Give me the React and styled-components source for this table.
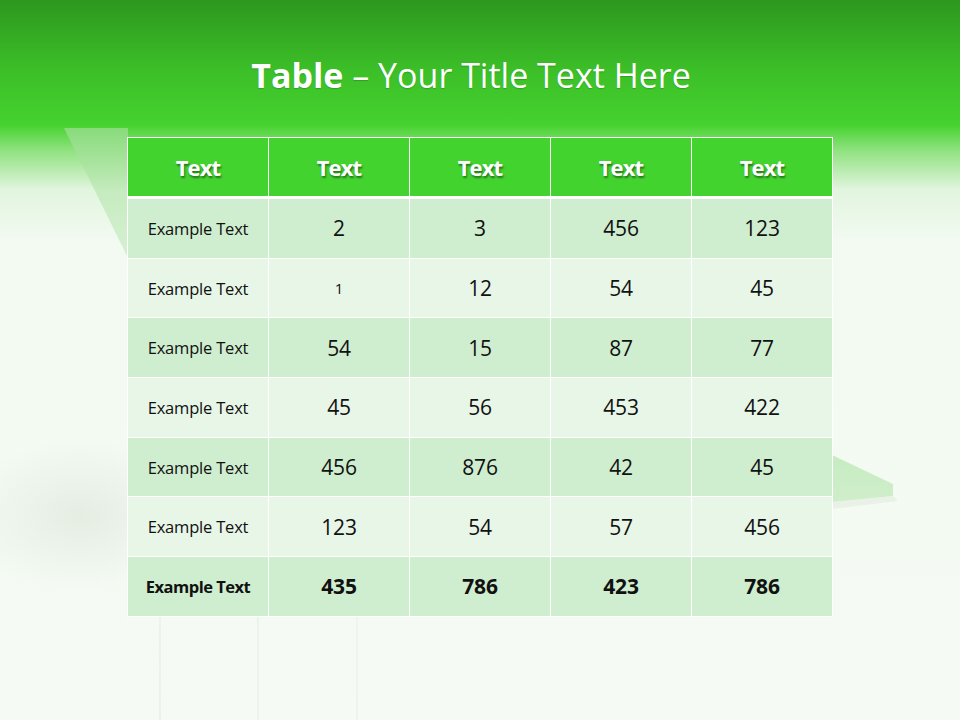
import React from "react";
import styled, { createGlobalStyle } from "styled-components";

const GlobalStyle = createGlobalStyle`
    html, body {
        margin: 0;
        padding: 0;
    }
    body {
        font-family: "Open Sans", "Liberation Sans", sans-serif;
    }
`

const Slide = styled.div`
    position: relative;
    width: 960px;
    height: 720px;
    overflow: hidden;
    background: linear-gradient(
        to bottom,
        #2d971e 0px,
        #3cbf28 70px,
        #45d22f 125px,
        #8fe27f 150px,
        #e2f5df 190px,
        #f2faf1 240px,
        #f5fbf4 720px
    );
`

const Backdrop = styled.svg`
    position: absolute;
    left: 0;
    top: 0;
    width: 960px;
    height: 720px;
`

const Content = styled.div`
    position: relative;
    display: flex;
    flex-direction: column;
    align-items: center;
`

const Title = styled.h1`
    margin: 53px 18px 0 0;
    height: 44px;
    font-family: "Open Sans", sans-serif;
    font-size: 34px;
    font-weight: 400;
    color: #ffffff;
    line-height: 44px;
    text-shadow: 0 1px 1px rgba(0, 60, 0, 0.25);

    b {
        font-weight: 700;
    }
`

const Table = styled.div`
    margin-top: 40px;
    display: grid;
    grid-template-columns: repeat(5, 141px);
    border-top: 1px solid #ffffff;
    border-left: 1px solid #ffffff;
`

const HeadCell = styled.div`
    height: 58px;
    display: flex;
    align-items: center;
    justify-content: center;
    background: #43d32f;
    border-right: 1px solid #ffffff;
    border-bottom: 3px solid #ffffff;
    font-family: "Open Sans", sans-serif;
    font-size: 22px;
    font-weight: 700;
    letter-spacing: -0.9px;
    color: #ffffff;
    text-shadow: 1px 2px 2px rgba(0, 0, 0, 0.45);
`

const Cell = styled.div`
    height: 58.7px;
    display: flex;
    align-items: center;
    justify-content: center;
    background: ${p => (p.$odd ? "#cfedcf" : "#e8f6e8")};
    border-right: 1px solid #ffffff;
    border-bottom: 1px solid #ffffff;
    font-family: "Open Sans", sans-serif;
    font-size: ${p => (p.$label ? "16.5px" : p.$small ? "15px" : "21px")};
    font-weight: ${p => (p.$bold ? 700 : 400)};
    letter-spacing: ${p => (p.$bold && p.$label ? "-0.5px" : "-0.2px")};
    color: #111111;
`

const rows = [
    ["2", "3", "456", "123"],
    ["1", "12", "54", "45"],
    ["54", "15", "87", "77"],
    ["45", "56", "453", "422"],
    ["456", "876", "42", "45"],
    ["123", "54", "57", "456"],
    ["435", "786", "423", "786"],
]

const App = () => {
    return (
        <Slide>
            <GlobalStyle />
            <Backdrop viewBox="0 0 960 720">
                <defs>
                    <radialGradient id="blob" cx="0.5" cy="0.5" r="0.5">
                        <stop offset="0" stopColor="#d3dcd0" stopOpacity="0.45" />
                        <stop offset="1" stopColor="#d3dcd0" stopOpacity="0" />
                    </radialGradient>
                    <linearGradient id="shard" x1="0" y1="0" x2="0" y2="1">
                        <stop offset="0" stopColor="#8fdc82" stopOpacity="0.9" />
                        <stop offset="0.5" stopColor="#bfe9b8" stopOpacity="0.8" />
                        <stop offset="1" stopColor="#c9ecc3" stopOpacity="0.7" />
                    </linearGradient>
                    <linearGradient id="wedge" x1="0" y1="0" x2="0" y2="1">
                        <stop offset="0" stopColor="#c6ecc1" />
                        <stop offset="1" stopColor="#cfeecb" />
                    </linearGradient>
                </defs>
                <polygon points="64,128 128,128 128,258" fill="url(#shard)" />
                <ellipse cx="80" cy="515" rx="120" ry="75" fill="url(#blob)" />
                <polygon points="832,455 893,484 893,496 832,502" fill="url(#wedge)" />
                <polygon points="832,502 893,496 898,501 832,509" fill="#e3ebe0" opacity="0.6" />
                <line x1="160" y1="616" x2="160" y2="720" stroke="#ecf3ea" strokeWidth="2" />
                <line x1="258" y1="616" x2="258" y2="720" stroke="#ecf3ea" strokeWidth="2" />
                <line x1="357" y1="616" x2="357" y2="720" stroke="#eef5ec" strokeWidth="2" />
            </Backdrop>
            <Content>
                <Title>
                    <b>Table</b> – Your Title Text Here
                </Title>
                <Table>
                    {["Text", "Text", "Text", "Text", "Text"].map((h, i) => (
                        <HeadCell key={i}>{h}</HeadCell>
                    ))}
                    {rows.map((r, ri) => {
                        const odd = ri % 2 === 0
                        const bold = ri === rows.length - 1
                        return (
                            <React.Fragment key={ri}>
                                <Cell $odd={odd} $label $bold={bold}>Example Text</Cell>
                                {r.map((v, ci) => (
                                    <Cell
                                        key={ci}
                                        $odd={odd}
                                        $bold={bold}
                                        $small={ri === 1 && ci === 0}
                                    >
                                        {v}
                                    </Cell>
                                ))}
                            </React.Fragment>
                        )
                    })}
                </Table>
            </Content>
        </Slide>
    )
}

export default App;
